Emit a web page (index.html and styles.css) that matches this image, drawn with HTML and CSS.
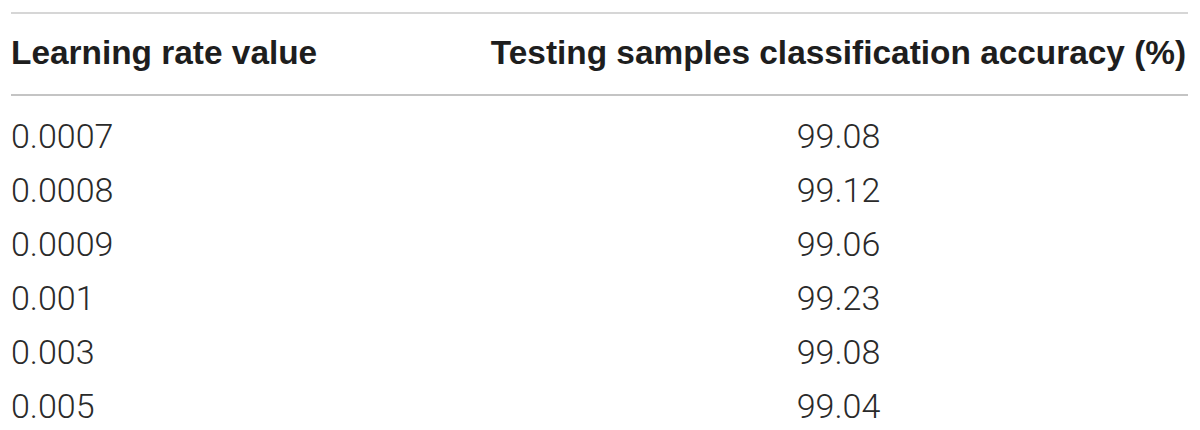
FILE: index.html
```html
<!DOCTYPE html>
<html>
<head>
<meta charset="utf-8">
<link rel="stylesheet" href="styles.css">
</head>
<body>
<div class="table">
  <div class="head">
    <div class="c1">Learning rate value</div>
    <div class="c2">Testing samples classification accuracy (%)</div>
  </div>
  <div class="body">
    <div class="row"><div class="c1">0.0007</div><div class="c2">99.08</div></div>
    <div class="row"><div class="c1">0.0008</div><div class="c2">99.12</div></div>
    <div class="row"><div class="c1">0.0009</div><div class="c2">99.06</div></div>
    <div class="row"><div class="c1">0.001</div><div class="c2">99.23</div></div>
    <div class="row"><div class="c1">0.003</div><div class="c2">99.08</div></div>
    <div class="row"><div class="c1">0.005</div><div class="c2">99.04</div></div>
  </div>
</div>
</body>
</html>
```
FILE: styles.css
```css
html, body {
  margin: 0;
  padding: 0;
  background: #ffffff;
}
body {
  padding: 12px 12px 0 11px;
  overflow: hidden;
}
.table {
  width: 1177px;
  border-top: 2px solid #d6d6d6;
}
.head {
  display: grid;
  grid-template-columns: 478px 1fr;
  height: 80px;
  align-items: center;
  border-bottom: 2px solid #c4c4c4;
  font-family: "Liberation Sans", Arial, sans-serif;
  font-weight: 700;
  font-size: 33.4px;
  color: #1e1e1e;
  white-space: nowrap;
}
.head .c1,
.head .c2 {
  margin-bottom: 3px;
}
.body {
  padding-top: 13px;
  font-family: Roboto, "Liberation Sans", sans-serif;
  font-weight: 300;
  font-size: 34px;
  color: #2a2a2a;
}
.row {
  display: grid;
  grid-template-columns: 478px 1fr;
  height: 54px;
  align-items: center;
  white-space: nowrap;
}
.c2 {
  text-align: center;
}
```
